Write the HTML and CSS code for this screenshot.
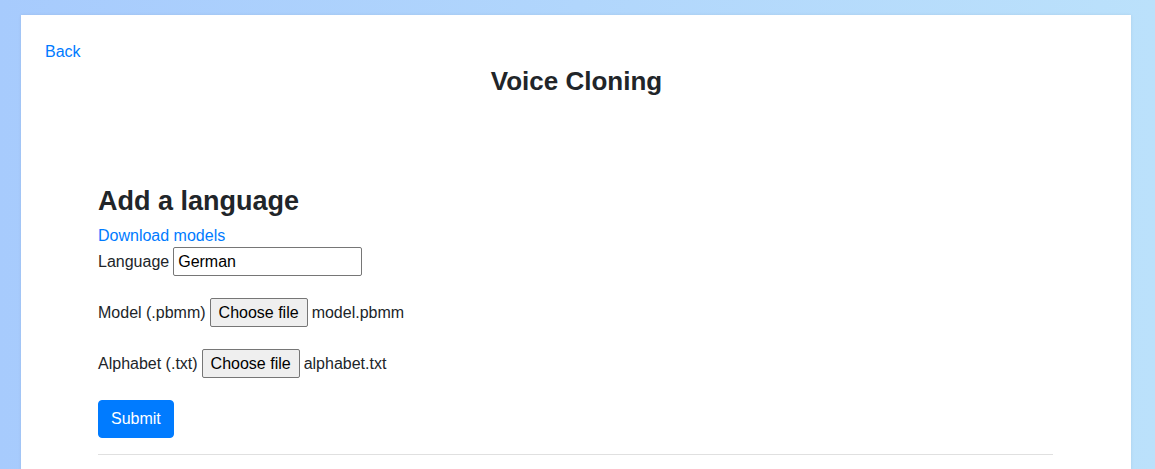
FILE: index.html
```html
<!DOCTYPE html>
<html lang="en">
<head>
<meta charset="utf-8">
<title>Voice Cloning</title>
<link rel="stylesheet" href="styles.css">
</head>
<body>
<div class="card">
  <a class="back" href="#">Back</a>
  <h1 class="title">Voice Cloning</h1>
  <div class="content">
    <h2 class="section-title">Add a language</h2>
    <a class="link" href="#">Download models</a>
    <form class="form">
      <div class="row">
        <label class="label">Language</label>
        <input class="text-input" type="text" value="German">
      </div>
      <div class="row">
        <span class="label">Model (.pbmm)</span>
        <span class="file-btn">Choose file</span>
        <span class="file-name">model.pbmm</span>
      </div>
      <div class="row">
        <span class="label">Alphabet (.txt)</span>
        <span class="file-btn">Choose file</span>
        <span class="file-name">alphabet.txt</span>
      </div>
      <div class="row row-submit">
        <button class="submit" type="button">Submit</button>
      </div>
    </form>
    <hr class="divider">
  </div>
</div>
</body>
</html>
```
FILE: styles.css
```css
html, body {
  margin: 0;
  padding: 0;
  height: 100%;
  overflow: hidden;
}
body {
  background: linear-gradient(to right, #a7cbfd, #bbe1fb);
  font-family: "Liberation Sans", Arial, sans-serif;
  font-size: 16px;
  line-height: 24px;
  color: #212529;
}
.card {
  margin: 15px 0 0 21px;
  width: 1110px;
  min-height: 600px;
  box-sizing: border-box;
  padding: 25px 24px 0 24px;
  background: #fff;
  box-shadow: 0 0 3px rgba(0, 0, 0, 0.08);
  display: flex;
  flex-direction: column;
}
.back {
  color: #007bff;
  text-decoration: none;
  align-self: flex-start;
}
.title {
  margin: 0;
  font-size: 26px;
  line-height: 34px;
  font-weight: 700;
  text-align: center;
  padding-left: 1px;
}
.content {
  width: 955px;
  margin: 86px 0 0 53px;
  display: flex;
  flex-direction: column;
  align-items: flex-start;
}
.section-title {
  margin: 0 0 6px 0;
  font-size: 27px;
  line-height: 34px;
  font-weight: 700;
}
.link {
  color: #007bff;
  text-decoration: none;
  line-height: 23px;
}
.form {
  display: flex;
  flex-direction: column;
  gap: 22px;
  width: 100%;
}
.row {
  display: flex;
  align-items: center;
  gap: 4px;
  height: 29px;
}
.row-submit {
  height: 38px;
}
.text-input {
  width: 189px;
  height: 29px;
  box-sizing: border-box;
  border: 1px solid #767676;
  border-radius: 2px;
  padding: 0 4px;
  font-family: "Liberation Sans", Arial, sans-serif;
  font-size: 16px;
  color: #000;
  margin: 0;
}
.file-btn {
  box-sizing: border-box;
  height: 29px;
  padding: 0 8px;
  display: flex;
  align-items: center;
  background: #efefef;
  border: 1px solid #767676;
  border-radius: 2px;
  color: #000;
}
.submit {
  height: 38px;
  padding: 0 12px;
  background: #007bff;
  color: #fff;
  border: 1px solid #007bff;
  border-radius: 4px;
  font-family: "Liberation Sans", Arial, sans-serif;
  font-size: 16px;
  margin: 0;
}
.divider {
  width: 100%;
  margin: 16px 0 0 0;
  border: 0;
  border-top: 1px solid #e0e0e0;
}
```
